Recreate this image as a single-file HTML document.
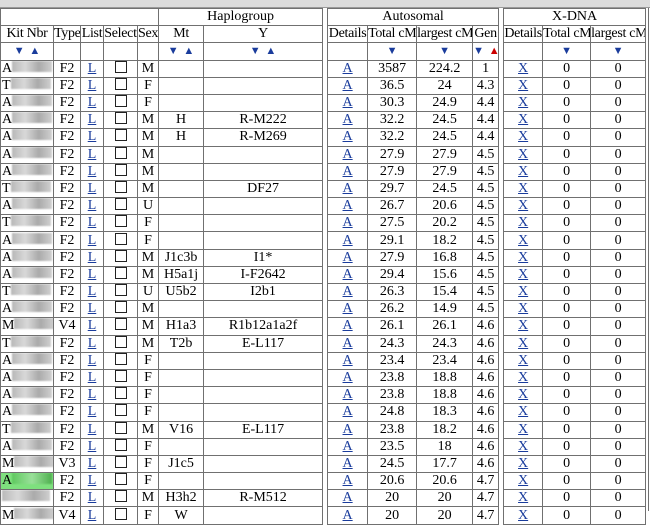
<!DOCTYPE html>
<html><head><meta charset="utf-8"><style>
body{margin:0;background:#fff;width:650px;height:511px;overflow:hidden;font-family:"Liberation Serif",serif;font-size:14px;color:#000}
.bar{position:absolute;left:0;top:0;width:650px;height:7px;background:#dcdcdc;border-bottom:1px solid #999}
table{position:absolute;left:0;top:8px;border-collapse:collapse;table-layout:fixed;width:645px}
td{border:1px solid #707070;height:16px;padding:0;text-align:center;white-space:nowrap;overflow:hidden;line-height:16px}
tr{height:17.2px}
tr.h td{letter-spacing:-0.3px}
td.s{border-top:hidden;border-bottom:hidden}
a{color:#1a3c9c;text-decoration:underline}
i{display:inline-block;width:10px;height:10px;border:1px solid #222;vertical-align:-1px}
td.k{text-align:left;padding-left:1px}
b{display:inline-block;width:40px;height:11px;background:linear-gradient(90deg,#b8b8b8,#d8d8d8,#aaaaaa,#cfcfcf);vertical-align:0px;filter:blur(0.8px)}
.g{background:#7ee07e}
.ar{color:#1a3c9c;font-size:11px;word-spacing:2px}
.r{color:#c00}
.rl{position:absolute;left:648px;top:8px;width:1px;height:503px;background:#707070}
</style></head><body>
<div class="bar"></div>
<table>
<colgroup><col style="width:53px"><col style="width:27px"><col style="width:23px"><col style="width:34px"><col style="width:21px"><col style="width:45px"><col style="width:119px"><col style="width:5px"><col style="width:40px"><col style="width:49px"><col style="width:56px"><col style="width:26px"><col style="width:5px"><col style="width:39px"><col style="width:48px"><col style="width:55px"></colgroup>
<tr><td colspan="5"></td><td colspan="2">Haplogroup</td><td class="s"></td><td colspan="4">Autosomal</td><td class="s"></td><td colspan="3">X-DNA</td></tr>
<tr class="h"><td>Kit Nbr</td><td>Type</td><td>List</td><td>Select</td><td>Sex</td><td>Mt</td><td>Y</td><td class="s"></td><td>Details</td><td>Total cM</td><td>largest cM</td><td>Gen</td><td class="s"></td><td>Details</td><td>Total cM</td><td>largest cM</td></tr>
<tr><td><span class="ar">▼ ▲</span></td><td></td><td></td><td></td><td></td><td><span class="ar">▼ ▲</span></td><td><span class="ar">▼ ▲</span></td><td class="s"></td><td></td><td><span class="ar">▼</span></td><td><span class="ar">▼</span></td><td><span class="ar">▼ <span class="r">▲</span></span></td><td class="s"></td><td></td><td><span class="ar">▼</span></td><td><span class="ar">▼</span></td></tr>
<tr><td class="k">A<b></b></td><td>F2</td><td><a>L</a></td><td><i></i></td><td>M</td><td></td><td></td><td class="s"></td><td><a>A</a></td><td>3587</td><td>224.2</td><td>1</td><td class="s"></td><td><a>X</a></td><td>0</td><td>0</td></tr>
<tr><td class="k">T<b></b></td><td>F2</td><td><a>L</a></td><td><i></i></td><td>F</td><td></td><td></td><td class="s"></td><td><a>A</a></td><td>36.5</td><td>24</td><td>4.3</td><td class="s"></td><td><a>X</a></td><td>0</td><td>0</td></tr>
<tr><td class="k">A<b></b></td><td>F2</td><td><a>L</a></td><td><i></i></td><td>F</td><td></td><td></td><td class="s"></td><td><a>A</a></td><td>30.3</td><td>24.9</td><td>4.4</td><td class="s"></td><td><a>X</a></td><td>0</td><td>0</td></tr>
<tr><td class="k">A<b></b></td><td>F2</td><td><a>L</a></td><td><i></i></td><td>M</td><td>H</td><td>R-M222</td><td class="s"></td><td><a>A</a></td><td>32.2</td><td>24.5</td><td>4.4</td><td class="s"></td><td><a>X</a></td><td>0</td><td>0</td></tr>
<tr><td class="k">A<b></b></td><td>F2</td><td><a>L</a></td><td><i></i></td><td>M</td><td>H</td><td>R-M269</td><td class="s"></td><td><a>A</a></td><td>32.2</td><td>24.5</td><td>4.4</td><td class="s"></td><td><a>X</a></td><td>0</td><td>0</td></tr>
<tr><td class="k">A<b></b></td><td>F2</td><td><a>L</a></td><td><i></i></td><td>M</td><td></td><td></td><td class="s"></td><td><a>A</a></td><td>27.9</td><td>27.9</td><td>4.5</td><td class="s"></td><td><a>X</a></td><td>0</td><td>0</td></tr>
<tr><td class="k">A<b></b></td><td>F2</td><td><a>L</a></td><td><i></i></td><td>M</td><td></td><td></td><td class="s"></td><td><a>A</a></td><td>27.9</td><td>27.9</td><td>4.5</td><td class="s"></td><td><a>X</a></td><td>0</td><td>0</td></tr>
<tr><td class="k">T<b></b></td><td>F2</td><td><a>L</a></td><td><i></i></td><td>M</td><td></td><td>DF27</td><td class="s"></td><td><a>A</a></td><td>29.7</td><td>24.5</td><td>4.5</td><td class="s"></td><td><a>X</a></td><td>0</td><td>0</td></tr>
<tr><td class="k">A<b></b></td><td>F2</td><td><a>L</a></td><td><i></i></td><td>U</td><td></td><td></td><td class="s"></td><td><a>A</a></td><td>26.7</td><td>20.6</td><td>4.5</td><td class="s"></td><td><a>X</a></td><td>0</td><td>0</td></tr>
<tr><td class="k">T<b></b></td><td>F2</td><td><a>L</a></td><td><i></i></td><td>F</td><td></td><td></td><td class="s"></td><td><a>A</a></td><td>27.5</td><td>20.2</td><td>4.5</td><td class="s"></td><td><a>X</a></td><td>0</td><td>0</td></tr>
<tr><td class="k">A<b></b></td><td>F2</td><td><a>L</a></td><td><i></i></td><td>F</td><td></td><td></td><td class="s"></td><td><a>A</a></td><td>29.1</td><td>18.2</td><td>4.5</td><td class="s"></td><td><a>X</a></td><td>0</td><td>0</td></tr>
<tr><td class="k">A<b></b></td><td>F2</td><td><a>L</a></td><td><i></i></td><td>M</td><td>J1c3b</td><td>I1*</td><td class="s"></td><td><a>A</a></td><td>27.9</td><td>16.8</td><td>4.5</td><td class="s"></td><td><a>X</a></td><td>0</td><td>0</td></tr>
<tr><td class="k">A<b></b></td><td>F2</td><td><a>L</a></td><td><i></i></td><td>M</td><td>H5a1j</td><td>I-F2642</td><td class="s"></td><td><a>A</a></td><td>29.4</td><td>15.6</td><td>4.5</td><td class="s"></td><td><a>X</a></td><td>0</td><td>0</td></tr>
<tr><td class="k">T<b></b></td><td>F2</td><td><a>L</a></td><td><i></i></td><td>U</td><td>U5b2</td><td>I2b1</td><td class="s"></td><td><a>A</a></td><td>26.3</td><td>15.4</td><td>4.5</td><td class="s"></td><td><a>X</a></td><td>0</td><td>0</td></tr>
<tr><td class="k">A<b></b></td><td>F2</td><td><a>L</a></td><td><i></i></td><td>M</td><td></td><td></td><td class="s"></td><td><a>A</a></td><td>26.2</td><td>14.9</td><td>4.5</td><td class="s"></td><td><a>X</a></td><td>0</td><td>0</td></tr>
<tr><td class="k">M<b></b></td><td>V4</td><td><a>L</a></td><td><i></i></td><td>M</td><td>H1a3</td><td>R1b12a1a2f</td><td class="s"></td><td><a>A</a></td><td>26.1</td><td>26.1</td><td>4.6</td><td class="s"></td><td><a>X</a></td><td>0</td><td>0</td></tr>
<tr><td class="k">T<b></b></td><td>F2</td><td><a>L</a></td><td><i></i></td><td>M</td><td>T2b</td><td>E-L117</td><td class="s"></td><td><a>A</a></td><td>24.3</td><td>24.3</td><td>4.6</td><td class="s"></td><td><a>X</a></td><td>0</td><td>0</td></tr>
<tr><td class="k">A<b></b></td><td>F2</td><td><a>L</a></td><td><i></i></td><td>F</td><td></td><td></td><td class="s"></td><td><a>A</a></td><td>23.4</td><td>23.4</td><td>4.6</td><td class="s"></td><td><a>X</a></td><td>0</td><td>0</td></tr>
<tr><td class="k">A<b></b></td><td>F2</td><td><a>L</a></td><td><i></i></td><td>F</td><td></td><td></td><td class="s"></td><td><a>A</a></td><td>23.8</td><td>18.8</td><td>4.6</td><td class="s"></td><td><a>X</a></td><td>0</td><td>0</td></tr>
<tr><td class="k">A<b></b></td><td>F2</td><td><a>L</a></td><td><i></i></td><td>F</td><td></td><td></td><td class="s"></td><td><a>A</a></td><td>23.8</td><td>18.8</td><td>4.6</td><td class="s"></td><td><a>X</a></td><td>0</td><td>0</td></tr>
<tr><td class="k">A<b></b></td><td>F2</td><td><a>L</a></td><td><i></i></td><td>F</td><td></td><td></td><td class="s"></td><td><a>A</a></td><td>24.8</td><td>18.3</td><td>4.6</td><td class="s"></td><td><a>X</a></td><td>0</td><td>0</td></tr>
<tr><td class="k">T<b></b></td><td>F2</td><td><a>L</a></td><td><i></i></td><td>M</td><td>V16</td><td>E-L117</td><td class="s"></td><td><a>A</a></td><td>23.8</td><td>18.2</td><td>4.6</td><td class="s"></td><td><a>X</a></td><td>0</td><td>0</td></tr>
<tr><td class="k">A<b></b></td><td>F2</td><td><a>L</a></td><td><i></i></td><td>F</td><td></td><td></td><td class="s"></td><td><a>A</a></td><td>23.5</td><td>18</td><td>4.6</td><td class="s"></td><td><a>X</a></td><td>0</td><td>0</td></tr>
<tr><td class="k">M<b></b></td><td>V3</td><td><a>L</a></td><td><i></i></td><td>F</td><td>J1c5</td><td></td><td class="s"></td><td><a>A</a></td><td>24.5</td><td>17.7</td><td>4.6</td><td class="s"></td><td><a>X</a></td><td>0</td><td>0</td></tr>
<tr><td class="k g">A<b style="background:linear-gradient(90deg,#5fc85f,#9ae09a,#4fb04f)"></b></td><td>F2</td><td><a>L</a></td><td><i></i></td><td>F</td><td></td><td></td><td class="s"></td><td><a>A</a></td><td>20.6</td><td>20.6</td><td>4.7</td><td class="s"></td><td><a>X</a></td><td>0</td><td>0</td></tr>
<tr><td class="k"><b style="width:48px"></b></td><td>F2</td><td><a>L</a></td><td><i></i></td><td>M</td><td>H3h2</td><td>R-M512</td><td class="s"></td><td><a>A</a></td><td>20</td><td>20</td><td>4.7</td><td class="s"></td><td><a>X</a></td><td>0</td><td>0</td></tr>
<tr><td class="k">M<b></b></td><td>V4</td><td><a>L</a></td><td><i></i></td><td>F</td><td>W</td><td></td><td class="s"></td><td><a>A</a></td><td>20</td><td>20</td><td>4.7</td><td class="s"></td><td><a>X</a></td><td>0</td><td>0</td></tr>
</table>
<div class="rl"></div>
</body></html>
